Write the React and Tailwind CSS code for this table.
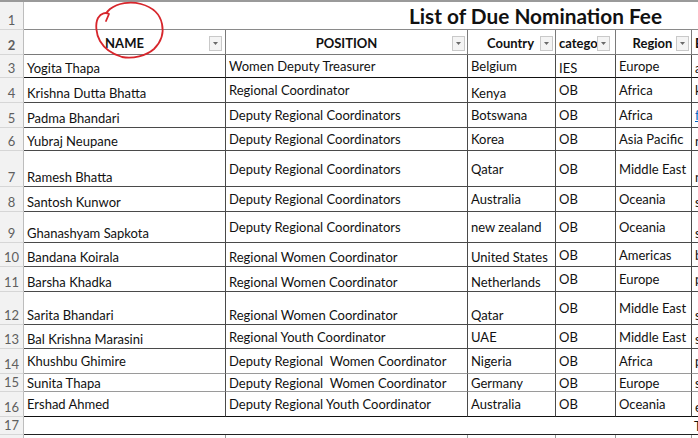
import React from "react";

const rows = [
  { n: 3, h: 23, name: "Yogita Thapa", na: "b", pos: "Women Deputy Treasurer", pa: "c", country: "Belgium", ca: "c", cat: "IES", ka: "b", region: "Europe", ra: "c", ex: "abc", ea: "b", bb: "border-b-[#111]" },
  { n: 4, h: 25, name: "Krishna Dutta Bhatta", na: "b", pos: "Regional Coordinator", pa: "c", country: "Kenya", ca: "b", cat: "OB", ka: "c", region: "Africa", ra: "c", ex: "kdb", ea: "c" },
  { n: 5, h: 25, name: "Padma Bhandari", na: "b", pos: "Deputy Regional Coordinators", pa: "c", country: "Botswana", ca: "c", cat: "OB", ka: "c", region: "Africa", ra: "c", ex: "f", ea: "c", link: true },
  { n: 6, h: 23, name: "Yubraj Neupane", na: "b", pos: "Deputy Regional Coordinators", pa: "c", country: "Korea", ca: "c", cat: "OB", ka: "c", region: "Asia Pacific", ra: "c", ex: "n", ea: "b" },
  { n: 7, h: 36, name: "Ramesh Bhatta", na: "b", pos: "Deputy Regional Coordinators", pa: "c", country: "Qatar", ca: "c", cat: "OB", ka: "c", region: "Middle East", ra: "c", ex: "n", ea: "b" },
  { n: 8, h: 25, name: "Santosh Kunwor", na: "b", pos: "Deputy Regional Coordinators", pa: "c", country: "Australia", ca: "c", cat: "OB", ka: "c", region: "Oceania", ra: "c", ex: "s", ea: "b" },
  { n: 9, h: 31, name: "Ghanashyam Sapkota", na: "b", pos: "Deputy Regional Coordinators", pa: "c", country: "new zealand", ca: "c", cat: "OB", ka: "c", region: "Oceania", ra: "c", ex: "s", ea: "b" },
  { n: 10, h: 24, name: "Bandana Koirala", na: "b", pos: "Regional Women Coordinator", pa: "b", country: "United States", ca: "b", cat: "OB", ka: "c", region: "Americas", ra: "c", ex: "b", ea: "c" },
  { n: 11, h: 25, name: "Barsha Khadka", na: "b", pos: "Regional Women Coordinator", pa: "b", country: "Netherlands", ca: "b", cat: "OB", ka: "c", region: "Europe", ra: "c", ex: "p", ea: "c" },
  { n: 12, h: 33, name: "Sarita Bhandari", na: "b", pos: "Regional Women Coordinator", pa: "b", country: "Qatar", ca: "b", cat: "OB", ka: "c", region: "Middle East", ra: "c", ex: "s", ea: "b" },
  { n: 13, h: 24, name: "Bal Krishna Marasini", na: "b", pos: "Regional Youth Coordinator", pa: "c", country: "UAE", ca: "c", cat: "OB", ka: "c", region: "Middle East", ra: "c", ex: "s", ea: "b" },
  { n: 14, h: 25, name: "Khushbu Ghimire", na: "c", pos: "Deputy Regional  Women Coordinator", pa: "c", country: "Nigeria", ca: "c", cat: "OB", ka: "c", region: "Africa", ra: "c", ex: "p", ea: "c", bb: "border-b-[#9a9a9a]" },
  { n: 15, h: 18, name: "Sunita Thapa", na: "c", pos: "Deputy Regional  Women Coordinator", pa: "c", country: "Germany", ca: "c", cat: "OB", ka: "c", region: "Europe", ra: "c", ex: "s", ea: "c", bb: "border-b-[#9a9a9a]" },
  { n: 16, h: 25, name: "Ershad Ahmed", na: "c", pos: "Deputy Regional Youth Coordinator", pa: "c", country: "Australia", ca: "c", cat: "OB", ka: "c", region: "Oceania", ra: "c", ex: "e", ea: "b", bb: "border-b-[#111]" },
];

const font = { fontFamily: "Lato, 'Liberation Sans', sans-serif" };

function FilterBtn() {
  return (
    <div className="w-[13px] h-[15px] bg-[#f4f4f4] border border-[#c9c9c9] flex items-center justify-center shrink-0">
      <svg width="5" height="3" viewBox="0 0 5 3">
        <path d="M0 0 L5 0 L2.5 3 Z" fill="#6a6a6a" />
      </svg>
    </div>
  );
}

function Cell({ text, align, className = "", extra = "" }) {
  return (
    <div
      className={`flex ${align === "b" ? "items-end pb-[1px]" : "items-center"} pl-[3px] overflow-hidden whitespace-pre border-r border-b border-[#4a4a4a] ${className}`}
    >
      <span className={`leading-[16px] ${extra}`}>{text}</span>
    </div>
  );
}

function RowNum({ n, className = "" }) {
  return (
    <div className={`flex items-end justify-center pb-[1px] bg-[#f2f2f2] border-r border-b border-r-[#bdbdbd] border-b-[#d6d6d6] text-[#5f5f5f] text-[13px] leading-[16px] ${className}`}>
      {n}
    </div>
  );
}

export default function App() {
  return (
    <div className="w-[698px] h-[438px] overflow-hidden relative bg-white text-[13px] text-[#111]" style={font}>
      <div className="border-t-2 border-t-[#9a9a9a]">
        {/* Row 1 */}
        <div className="grid grid-cols-[24px_1fr] h-[28px]">
          <RowNum n={1} className="items-center pb-0" />
          <div className="border-b border-[#8a8a8a] flex items-center pl-[385px] pt-[2px]">
            <span className="font-bold text-[20.8px] leading-none">List of Due Nomination Fee</span>
          </div>
        </div>
        {/* Row 2 header */}
        <div className="grid grid-cols-[24px_202px_242px_88px_60px_76px_40px] h-[25px] font-bold">
          <RowNum n={2} className="items-center pb-0 pt-[2px]" />
          <div className="relative flex items-center justify-center pt-[3px] border-r border-b border-[#7a7a7a]">
            <span>NAME</span>
            <div className="absolute right-[3px] top-[6px]"><FilterBtn /></div>
          </div>
          <div className="relative flex items-center justify-center pt-[3px] border-r border-b border-[#7a7a7a]">
            <span>POSITION</span>
            <div className="absolute right-[2px] top-[6px]"><FilterBtn /></div>
          </div>
          <div className="relative flex items-center justify-center pt-[3px] border-r border-b border-[#7a7a7a] pr-[2px]">
            <span>Country</span>
            <div className="absolute right-[2px] top-[6px]"><FilterBtn /></div>
          </div>
          <div className="relative flex items-center pl-[3px] pt-[3px] border-r border-b border-[#7a7a7a] overflow-hidden">
            <span>catego</span>
            <div className="absolute right-[5px] top-[6px]"><FilterBtn /></div>
          </div>
          <div className="relative flex items-center justify-center pt-[3px] border-r border-b border-[#7a7a7a] pr-[2px]">
            <span>Region</span>
            <div className="absolute right-[2px] top-[6px]"><FilterBtn /></div>
          </div>
          <div className="flex items-center pl-[3px] pt-[3px] border-b border-[#7a7a7a]">
            <span>Email</span>
          </div>
        </div>
        {rows.map((r) => (
          <div
            key={r.n}
            className="grid grid-cols-[24px_202px_242px_88px_60px_76px_40px]"
            style={{ height: r.h }}
          >
            <RowNum n={r.n} />
            <Cell text={r.name} align={r.na} className={r.bb || ""} />
            <Cell text={r.pos} align={r.pa} className={r.bb || ""} />
            <Cell text={r.country} align={r.ca} className={r.bb || ""} />
            <Cell text={r.cat} align={r.ka} className={r.bb || ""} />
            <Cell text={r.region} align={r.ra} className={r.bb || ""} />
            <Cell
              text={r.ex}
              align={r.ea}
              className={`border-r-0 ${r.bb || ""}`}
              extra={r.link ? "text-[#0563c1] underline" : ""}
            />
          </div>
        ))}
        {/* Row 17 */}
        <div className="grid grid-cols-[24px_668px_40px] h-[18px]">
          <RowNum n={17} />
          <div className="border-b border-[#222]" />
          <div className="border-b border-[#222] flex items-end pl-[2px] leading-[16px]">T</div>
        </div>
        {/* Row 18 */}
        <div className="grid grid-cols-[24px_202px_242px_88px_60px_76px_40px] h-[20px]">
          <RowNum n={18} />
          <div className="border-r border-[#9a9a9a]" />
          <div className="border-r border-[#9a9a9a]" />
          <div className="border-r border-[#9a9a9a]" />
          <div className="border-r border-[#9a9a9a]" />
          <div className="border-r border-[#9a9a9a]" />
          <div />
        </div>
      </div>
      {/* red hand-drawn circle */}
      <svg className="absolute left-0 top-0 pointer-events-none" width="200" height="70" viewBox="0 0 200 70">
        <path
          d="M106 21 L109 14 C106 12 101 13 98 18 C95 24 96 34 100 41 C104 48 112 54 122 57 C133 59 146 56 154 49 C161 42 164 33 162 24 C160 14 152 7 141 4 C130 1 118 3 110 9 L107 12"
          fill="none"
          stroke="#d7262c"
          strokeWidth="1.8"
          strokeLinecap="round"
          strokeLinejoin="round"
        />
      </svg>
    </div>
  );
}
